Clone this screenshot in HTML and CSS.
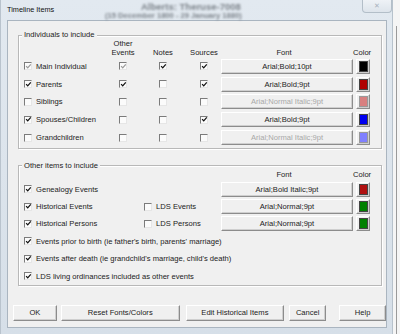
FILE: index.html
```html
<!DOCTYPE html>
<html>
<head>
<meta charset="utf-8">
<link rel="stylesheet" href="styles.css">
</head>
<body>
<div class="window">
  <div class="titlebar">
    <span class="title">Timeline Items</span>
    <div class="behind">
      <div class="behind-1">Alberts: Theruse-7008</div>
      <div class="behind-2">(15 December 1800 - 29 January 1880)</div>
    </div>
    <div class="close">&#x2715;</div>
  </div>
  <div class="client">
    <fieldset class="group g1">
      <legend>Individuals to include</legend>
      <div class="grid1">
        <div class="hd"></div>
        <div class="hd c">Other<br>Events</div>
        <div class="hd c">Notes</div>
        <div class="hd c">Sources</div>
        <div class="hd c font-hd">Font</div>
        <div class="hd c">Color</div>

        <label class="item"><span class="cb on dis"><svg viewBox="0 0 8 8"><path d="M1.3 3.6 3.1 5.6 6.6 1.6"/></svg></span>Main Individual</label>
        <span class="cb on dis cc"><svg viewBox="0 0 8 8"><path d="M1.3 3.6 3.1 5.6 6.6 1.6"/></svg></span>
        <span class="cb on cc"><svg viewBox="0 0 8 8"><path d="M1.3 3.6 3.1 5.6 6.6 1.6"/></svg></span>
        <span class="cb on cc"><svg viewBox="0 0 8 8"><path d="M1.3 3.6 3.1 5.6 6.6 1.6"/></svg></span>
        <button class="btn fontbtn">Arial;Bold;10pt</button>
        <button class="btn colorbtn"><span class="sw" style="background:#000000"></span></button>

        <label class="item"><span class="cb on"><svg viewBox="0 0 8 8"><path d="M1.3 3.6 3.1 5.6 6.6 1.6"/></svg></span>Parents</label>
        <span class="cb on cc"><svg viewBox="0 0 8 8"><path d="M1.3 3.6 3.1 5.6 6.6 1.6"/></svg></span>
        <span class="cb cc"></span>
        <span class="cb on cc"><svg viewBox="0 0 8 8"><path d="M1.3 3.6 3.1 5.6 6.6 1.6"/></svg></span>
        <button class="btn fontbtn">Arial;Bold;9pt</button>
        <button class="btn colorbtn"><span class="sw" style="background:#b00000"></span></button>

        <label class="item"><span class="cb"></span>Siblings</label>
        <span class="cb cc"></span>
        <span class="cb cc"></span>
        <span class="cb cc"></span>
        <button class="btn fontbtn off">Arial;Normal Italic;9pt</button>
        <button class="btn colorbtn"><span class="sw light" style="background:#d88080"></span></button>

        <label class="item"><span class="cb on"><svg viewBox="0 0 8 8"><path d="M1.3 3.6 3.1 5.6 6.6 1.6"/></svg></span>Spouses/Children</label>
        <span class="cb cc"></span>
        <span class="cb cc"></span>
        <span class="cb on cc"><svg viewBox="0 0 8 8"><path d="M1.3 3.6 3.1 5.6 6.6 1.6"/></svg></span>
        <button class="btn fontbtn">Arial;Bold;9pt</button>
        <button class="btn colorbtn"><span class="sw" style="background:#0000f0"></span></button>

        <label class="item"><span class="cb"></span>Grandchildren</label>
        <span class="cb cc"></span>
        <span class="cb cc"></span>
        <span class="cb cc"></span>
        <button class="btn fontbtn off">Arial;Normal Italic;9pt</button>
        <button class="btn colorbtn"><span class="sw light" style="background:#8080ff"></span></button>
      </div>
    </fieldset>

    <fieldset class="group g2">
      <legend>Other items to include</legend>
      <div class="grid2">
        <div class="hd2"></div>
        <div class="hd2"></div>
        <div class="hd2 c font-hd">Font</div>
        <div class="hd2 c">Color</div>

        <label class="item"><span class="cb on"><svg viewBox="0 0 8 8"><path d="M1.3 3.6 3.1 5.6 6.6 1.6"/></svg></span>Genealogy Events</label>
        <div></div>
        <button class="btn fontbtn">Arial;Bold Italic;9pt</button>
        <button class="btn colorbtn"><span class="sw" style="background:#b01010"></span></button>

        <label class="item"><span class="cb on"><svg viewBox="0 0 8 8"><path d="M1.3 3.6 3.1 5.6 6.6 1.6"/></svg></span>Historical Events</label>
        <label class="item"><span class="cb"></span>LDS Events</label>
        <button class="btn fontbtn">Arial;Normal;9pt</button>
        <button class="btn colorbtn"><span class="sw" style="background:#008000"></span></button>

        <label class="item"><span class="cb on"><svg viewBox="0 0 8 8"><path d="M1.3 3.6 3.1 5.6 6.6 1.6"/></svg></span>Historical Persons</label>
        <label class="item"><span class="cb"></span>LDS Persons</label>
        <button class="btn fontbtn">Arial;Normal;9pt</button>
        <button class="btn colorbtn"><span class="sw" style="background:#008000"></span></button>

        <label class="item wide"><span class="cb on"><svg viewBox="0 0 8 8"><path d="M1.3 3.6 3.1 5.6 6.6 1.6"/></svg></span>Events prior to birth (ie father's birth, parents' marriage)</label>
        <label class="item wide"><span class="cb on"><svg viewBox="0 0 8 8"><path d="M1.3 3.6 3.1 5.6 6.6 1.6"/></svg></span>Events after death (ie grandchild's marriage, child's death)</label>
        <label class="item wide"><span class="cb on"><svg viewBox="0 0 8 8"><path d="M1.3 3.6 3.1 5.6 6.6 1.6"/></svg></span>LDS living ordinances included as other events</label>
      </div>
    </fieldset>

    <div class="buttons">
      <button class="btn b-ok">OK</button>
      <button class="btn b-reset">Reset Fonts/Colors</button>
      <button class="btn b-edit">Edit Historical Items</button>
      <button class="btn b-cancel">Cancel</button>
      <button class="btn b-help">Help</button>
    </div>
  </div>
</div>
<div class="side"><div class="side-line"></div></div>
</body>
</html>
```

FILE: styles.css
```css
* { box-sizing: border-box; }

body {
  margin: 0;
  width: 400px;
  height: 334px;
  overflow: hidden;
  display: flex;
  background: #f3f3f3;
  font-family: "Liberation Sans", Arial, sans-serif;
  font-size: 7.6px;
  color: #222;
}

.window {
  width: 393px;
  height: 334px;
  flex: none;
  background: linear-gradient(#e2e9f0, #d6dfe8);
  padding: 0 5px 6px 6px;
  display: flex;
  flex-direction: column;
  border-right: 1px solid #b7c2cc;
  border-left: 1px solid #b9c3cd;
}

.titlebar {
  height: 20px;
  flex: none;
  position: relative;
  display: flex;
  align-items: center;
  padding-bottom: 2px;
}

.title {
  position: relative;
  z-index: 2;
  color: #111;
  font-size: 7.3px;
}

.behind {
  position: absolute;
  left: 0;
  top: 0;
  width: 380px;
  height: 20px;
  overflow: hidden;
  filter: blur(1px);
  color: #7d848b;
}

.behind-1 {
  position: absolute;
  left: 134px;
  top: 2px;
  font-weight: bold;
  font-size: 9.5px;
  line-height: 10px;
}

.behind-2 {
  position: absolute;
  left: 98px;
  top: 12px;
  font-weight: bold;
  font-size: 7.6px;
  line-height: 8px;
}

.close {
  position: absolute;
  right: -5px;
  top: 0;
  width: 30px;
  height: 13px;
  border: 1px solid #b3bec8;
  border-top: none;
  border-radius: 0 0 4px 4px;
  background: linear-gradient(#eef2f6, #dde4eb);
  color: #a9b3bd;
  font-size: 7px;
  display: flex;
  align-items: center;
  justify-content: center;
  z-index: 2;
}

.client {
  flex: 1;
  background: #f0f0f0;
  border: 1px solid #aab5c0;
  padding: 0 0 0 10px;
  display: flex;
  flex-direction: column;
}

.group {
  margin: 0;
  padding: 0 0 0 3px;
  min-width: 0;
  width: 364px;
  border: 1px solid #b8b8b8;
  box-shadow: 1px 1px 0 #fff, inset 1px 1px 0 #fff;
}

.group legend {
  padding: 0 2px;
  line-height: 8px;
  background: #f0f0f0;
  color: #222;
}

.g1 {
  margin-top: 10px;
  padding-bottom: 2px;
}

.g2 {
  margin-top: 12.5px;
  padding-bottom: 0;
}

.grid1 {
  margin-left: 2px;
  display: grid;
  grid-template-columns: 83px 32px 48px 34px 132px 17px;
  grid-template-rows: 18.5px repeat(5, 17.8px);
  align-items: center;
}

.grid2 {
  margin-left: 2px;
  display: grid;
  grid-template-columns: 120px 77px 132px 17px;
  grid-template-rows: 10.5px repeat(6, 17.4px);
  align-items: center;
}

.hd {
  align-self: end;
  line-height: 9px;
  padding-bottom: 1px;
}

.hd2 {
  align-self: start;
  line-height: 9px;
}

.c { text-align: center; }
.font-hd { padding-right: 6px; }

.item {
  display: flex;
  align-items: center;
  gap: 4px;
  white-space: nowrap;
}

.wide { grid-column: 1 / -1; }

.cb {
  width: 8px;
  height: 8px;
  flex: none;
  display: block;
  border: 1px solid;
  border-color: #7b7b7b #e6e6e6 #e6e6e6 #7b7b7b;
  background: #fbfbfb;
  position: relative;
}

.cc { justify-self: center; }

.cb svg {
  position: absolute;
  left: -0.5px;
  top: -0.5px;
  width: 7px;
  height: 7px;
  overflow: visible;
}

.cb svg path {
  fill: none;
  stroke: #111;
  stroke-width: 1.45;
}

.cb.dis svg path { stroke: #9a9a9a; }

.btn {
  font-family: inherit;
  font-size: 7.6px;
  color: #222;
  background: #f0f0f0;
  border: 1px solid;
  border-color: #fff #8c8c8c #8c8c8c #fff;
  box-shadow: inset -1px -1px 0 #cfcfcf;
  padding: 0;
  margin: 0;
  height: 15px;
  display: flex;
  align-items: center;
  justify-content: center;
}

.fontbtn { width: 132px; }
.fontbtn.off { color: #a8a8a8; }

.colorbtn {
  width: 14px;
  justify-self: end;
  padding: 1px;
}

.sw {
  display: block;
  width: 9px;
  height: 11px;
  border: 1px solid #444;
}

.sw.light { border-color: #999; }

.buttons {
  display: flex;
  margin-top: 19px;
  margin-left: -5px;
}

.buttons .btn { height: 16px; }
.b-ok { width: 44px; }
.b-reset { width: 119px; margin-left: 4px; }
.b-edit { width: 99px; margin-left: 6px; }
.b-cancel { width: 37px; margin-left: 5px; }
.b-help { width: 47px; margin-left: 13px; }

.side {
  flex: 1;
  position: relative;
  background: #f5f5f5;
}

.side-line {
  margin-top: 26px;
  margin-left: 3px;
  width: 1px;
  height: 308px;
  background: #9a9a9a;
}
```
